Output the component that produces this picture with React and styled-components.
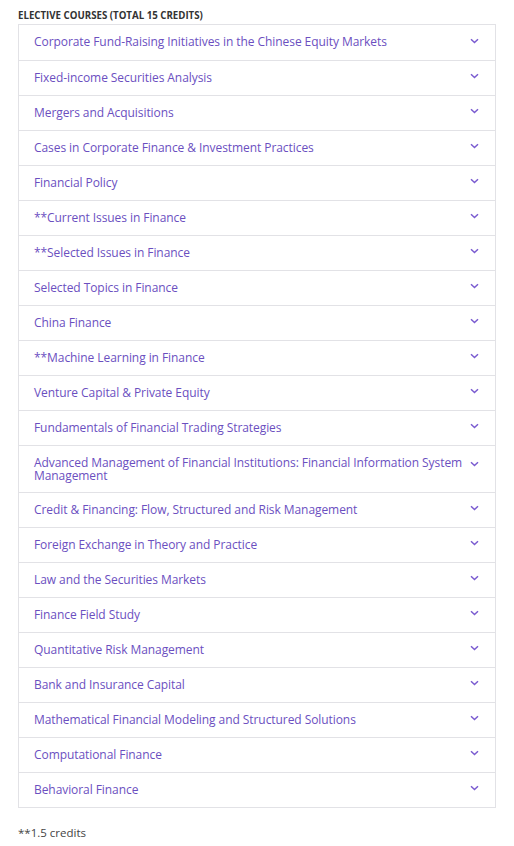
import React from "react";
import styled, { createGlobalStyle } from "styled-components";

const Global = createGlobalStyle`
  html, body { margin: 0; padding: 0; background: #fff; }
  body { font-family: "Open Sans", "Noto Sans", sans-serif; }
`;

const Page = styled.div`
  padding: 9px 18px 0 18px;
  width: 478px;
`;

const Heading = styled.div`
  font-size: 9.7px;
  font-weight: 700;
  color: #333;
  line-height: 14px;
  margin-bottom: 1px;
`;

const List = styled.div`
  border: 1px solid #e2e2e6;
  display: flex;
  flex-direction: column;
`;

const Row = styled.div`
  display: flex;
  align-items: center;
  justify-content: space-between;
  min-height: 35px;
  padding: ${(p) => (p.$wrap ? "11px" : "0")} 16px ${(p) => (p.$wrap ? "10px" : "0")} 15px;
  box-sizing: border-box;
  border-top: ${(p) => (p.$first ? "none" : "1px solid #e2e2e6")};
  gap: 4px;
`;

const Title = styled.span`
  color: #6b4fbf;
  font-size: 12px;
  line-height: 12.5px;
  letter-spacing: -0.07px;
`;

const Chevron = styled.svg`
  flex: 0 0 auto;
  width: 9px;
  height: 6px;
  align-self: ${(p) => (p.$wrap ? "flex-start" : "center")};
  margin-top: ${(p) => (p.$wrap ? "4px" : "-4px")};
`;

const Footnote = styled.div`
  margin-top: 17px;
  font-size: 11.5px;
  color: #444;
`;

const courses = [
  "Corporate Fund-Raising Initiatives in the Chinese Equity Markets",
  "Fixed-income Securities Analysis",
  "Mergers and Acquisitions",
  "Cases in Corporate Finance & Investment Practices",
  "Financial Policy",
  "**Current Issues in Finance",
  "**Selected Issues in Finance",
  "Selected Topics in Finance",
  "China Finance",
  "**Machine Learning in Finance",
  "Venture Capital & Private Equity",
  "Fundamentals of Financial Trading Strategies",
  "Advanced Management of Financial Institutions: Financial Information System Management",
  "Credit & Financing: Flow, Structured and Risk Management",
  "Foreign Exchange in Theory and Practice",
  "Law and the Securities Markets",
  "Finance Field Study",
  "Quantitative Risk Management",
  "Bank and Insurance Capital",
  "Mathematical Financial Modeling and Structured Solutions",
  "Computational Finance",
  "Behavioral Finance",
];

export default function App() {
  return (
    <>
      <Global />
      <Page>
        <Heading>ELECTIVE COURSES (TOTAL 15 CREDITS)</Heading>
        <List>
          {courses.map((c, i) => {
            const wrap = c.length > 70;
            return (
              <Row key={i} $first={i === 0} $wrap={wrap}>
                <Title>{c}</Title>
                <Chevron $wrap={wrap} viewBox="0 0 9 6">
                  <path d="M1 1.2 L4.5 4.5 L8 1.2" fill="none" stroke="#7a5bd0" strokeWidth="1.5" />
                </Chevron>
              </Row>
            );
          })}
        </List>
        <Footnote>**1.5 credits</Footnote>
      </Page>
    </>
  );
}
